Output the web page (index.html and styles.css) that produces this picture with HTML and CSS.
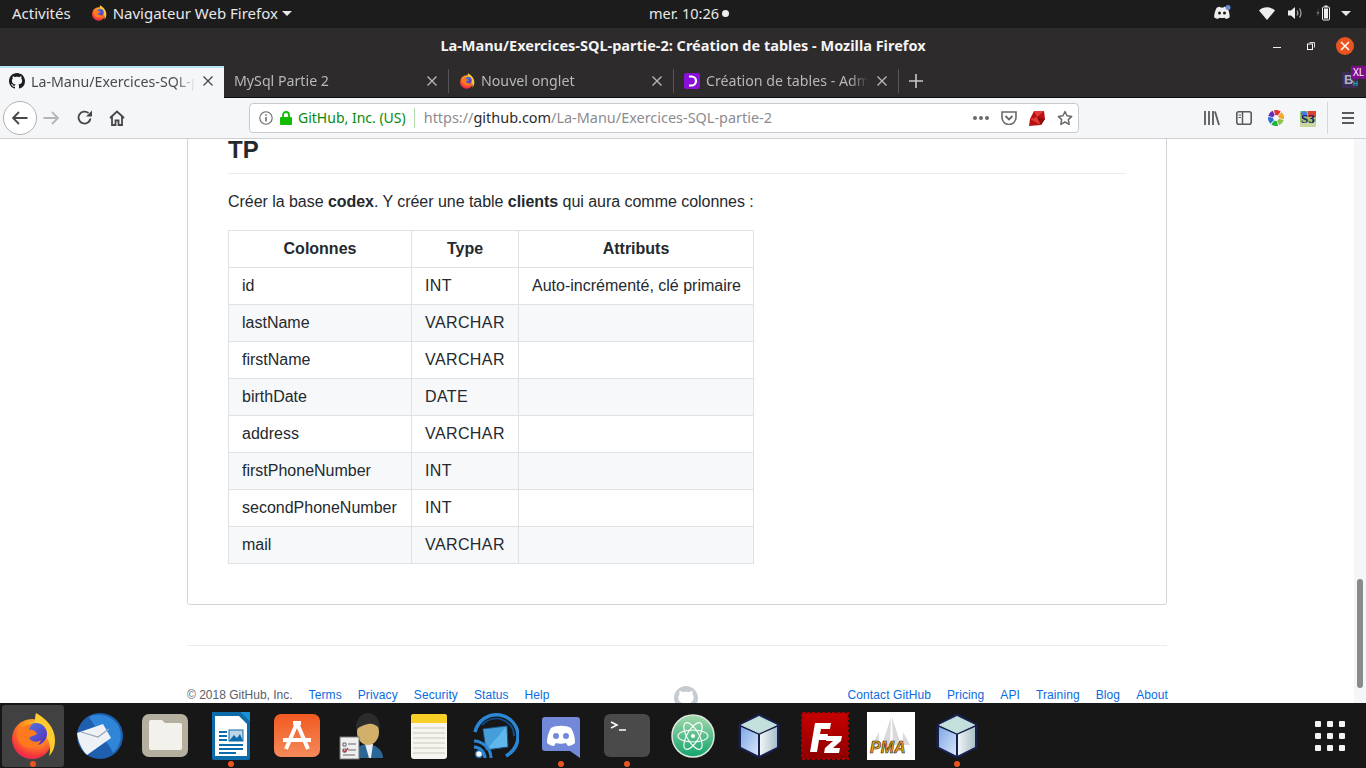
FILE: index.html
```html
<!DOCTYPE html>
<html lang="fr">
<head>
    <meta charset="UTF-8">
    <title>La-Manu/Exercices-SQL-partie-2: Création de tables - Mozilla Firefox</title>
    <link rel="stylesheet" href="styles.css">
</head>
<body>
    <svg class="defs" width="0" height="0">
        <defs>
            <radialGradient id="foxBody" cx="60%" cy="25%" r="85%">
                <stop offset="0" stop-color="#ffd43a"/>
                <stop offset="0.45" stop-color="#ff8a1e"/>
                <stop offset="0.8" stop-color="#f5333f"/>
                <stop offset="1" stop-color="#e0206a"/>
            </radialGradient>
            <linearGradient id="foxGlobe" x1="0" y1="0" x2="1" y2="1">
                <stop offset="0" stop-color="#4a7fe8"/>
                <stop offset="1" stop-color="#5b2bb8"/>
            </linearGradient>
            <linearGradient id="cubeLeft" x1="0" y1="0" x2="1" y2="1">
                <stop offset="0" stop-color="#7fa8e8"/>
                <stop offset="1" stop-color="#d8e6f6"/>
            </linearGradient>
            <linearGradient id="cubeRight" x1="0" y1="0" x2="1" y2="0">
                <stop offset="0" stop-color="#f0f5f8"/>
                <stop offset="1" stop-color="#a9c0c8"/>
            </linearGradient>
            <linearGradient id="appstoreBg" x1="0" y1="0" x2="0" y2="1">
                <stop offset="0" stop-color="#f25a20"/>
                <stop offset="1" stop-color="#f48a5a"/>
            </linearGradient>
            <linearGradient id="atomBg" x1="0" y1="0" x2="0" y2="1">
                <stop offset="0" stop-color="#a4d9ab"/>
                <stop offset="1" stop-color="#12a46d"/>
            </linearGradient>
            <linearGradient id="fzBg" x1="0" y1="0" x2="0" y2="1">
                <stop offset="0" stop-color="#c70000"/>
                <stop offset="1" stop-color="#8c0000"/>
            </linearGradient>
            <symbol id="fox" viewBox="0 0 48 48">
                <circle cx="23" cy="27" r="20" fill="url(#foxBody)"/>
                <path d="M27 1c9 5 19 14 19 27 0 7-2 12-6 16 2-7 1-14-3-19-4-5-10-8-11-15 0-3 0-6 1-9z" fill="#ffcb2e"/>
                <circle cx="27" cy="22" r="11" fill="url(#foxGlobe)"/>
                <path d="M9 20c3-6 10-8 15-8-3 2-4 4-4 6 3-1 7 1 8 4-3 2-6 2-8 4 2 4 8 5 12 2-2 6-9 9-15 7-7-2-10-10-8-15z" fill="#ff7a1f"/>
            </symbol>
            <symbol id="cube" viewBox="0 0 48 48">
                <path d="M24 3l19 10v22L24 45 5 35V13z" fill="#18204e" stroke="#18204e" stroke-width="3" stroke-linejoin="round"/>
                <path d="M24 4.500l17.500 8.500-17.500 8-17.500-8z" fill="#c4e0dc" stroke="#c4e0dc" stroke-linejoin="round"/>
                <path d="M6 15l17 7.500v21L6 35z" fill="url(#cubeLeft)"/>
                <path d="M25 22.500l17-7.500v20l-17 8.500z" fill="url(#cubeRight)"/>
            </symbol>
            <symbol id="octocat" viewBox="0 0 16 16">
                <path fill-rule="evenodd" d="M8 0C3.58 0 0 3.58 0 8c0 3.54 2.29 6.53 5.47 7.59.4.07.55-.17.55-.38 0-.19-.01-.82-.01-1.49-2.01.37-2.53-.49-2.69-.94-.09-.23-.48-.94-.82-1.13-.28-.15-.68-.52-.01-.53.63-.01 1.08.58 1.23.82.72 1.21 1.87.87 2.33.66.07-.52.28-.87.51-1.07-1.78-.2-3.64-.89-3.64-3.95 0-.87.31-1.59.82-2.15-.08-.2-.36-1.02.08-2.12 0 0 .67-.21 2.2.82.64-.18 1.32-.27 2-.27s1.36.09 2 .27c1.53-1.04 2.2-.82 2.2-.82.44 1.1.16 1.92.08 2.12.51.56.82 1.27.82 2.15 0 3.07-1.87 3.75-3.65 3.95.29.25.54.73.54 1.48 0 1.07-.01 1.93-.01 2.2 0 .21.15.46.55.38A8.01 8.01 0 0 0 16 8c0-4.42-3.58-8-8-8z"/>
            </symbol>
        </defs>
    </svg>

    <!-- gnome panel -->
    <header class="top-bar">
        <div class="top-left">
            <span class="activities">Activités</span>
            <svg class="top-fox"><use href="#fox"/></svg>
            <span>Navigateur Web Firefox</span>
            <span class="caret"></span>
        </div>
        <div class="top-clock">mer. 10:26 <span class="clock-dot"></span></div>
        <div class="top-right">
            <svg class="tray-discord" width="18" height="16" viewBox="0 0 18 16">
                <path d="M3.5 3C5 2 6.5 1.8 7 1.8l.3.6h3.4l.3-.6c.5 0 2 .2 3.5 1.2 1.5 3 2.2 6 2.2 9.2-1.200 1-2.600 1.600-4 1.800l-.8-1.300c-2 .5-4 .5-6 0l-.8 1.300c-1.400-.2-2.800-.8-4-1.800C1.300 9 2 6 3.500 3z" fill="#eee"/>
                <circle cx="6.500" cy="8" r="1.500" fill="#1c1c1c"/>
                <circle cx="11.500" cy="8" r="1.500" fill="#1c1c1c"/>
                <circle cx="15" cy="2.500" r="2.500" fill="#6a8ad8"/>
            </svg>
            <svg class="tray-wifi" width="16" height="13" viewBox="0 0 16 13"><path d="M0 3.500C4.500-.8 11.500-.8 16 3.500L8 13z" fill="#eee"/></svg>
            <svg class="tray-sound" width="15" height="14" viewBox="0 0 15 14">
                <path d="M0 4.500h3L7 1v12L3 9.500H0z" fill="#eee"/>
                <path d="M9 4.500c1 1.500 1 3.500 0 5M11.500 2.500c2 2.500 2 6.500 0 9" stroke="#aaa" stroke-width="1.200" fill="none"/>
            </svg>
            <svg class="tray-battery" width="16" height="16" viewBox="0 0 16 16">
                <path d="M3 3.500L.5 8.500h1.500L1 12.500l2.500-5.500H2z" fill="#777"/>
                <rect x="6.500" y="2" width="7" height="13" rx="1" fill="none" stroke="#eee"/>
                <rect x="8.500" y="0.500" width="3" height="1.500" fill="#eee"/>
                <rect x="8" y="3.500" width="4" height="10" fill="#eee"/>
            </svg>
            <span class="caret caret-tray"></span>
        </div>
    </header>

    <div class="title-bar">
        <span class="title-text">La-Manu/Exercices-SQL-partie-2: Création de tables - Mozilla Firefox</span>
        <div class="win-buttons">
            <span class="win-min"></span>
            <svg class="win-max" width="8" height="8" viewBox="0 0 8 8">
                <path d="M2.500 .5h5v5" fill="none" stroke="#ddd"/>
                <rect x=".5" y="2" width="5" height="5.500" fill="none" stroke="#fff"/>
            </svg>
            <span class="win-close">
                <svg width="10" height="10" viewBox="0 0 10 10"><path d="M1 1l8 8M9 1l-8 8" stroke="#fff" stroke-width="1.500"/></svg>
            </span>
        </div>
    </div>

    <div class="tab-bar">
        <div class="tab active">
            <svg class="tab-icon"><use href="#octocat"/></svg>
            <span class="tab-label">La-Manu/Exercices-SQL-partie-2</span>
            <svg class="tab-x" width="10" height="10" viewBox="0 0 10 10"><path d="M.5.5l9 9M9.500.5l-9 9"/></svg>
        </div>
        <div class="tab">
            <span class="tab-label">MySql Partie 2</span>
            <svg class="tab-x" width="10" height="10" viewBox="0 0 10 10"><path d="M.5.5l9 9M9.500.5l-9 9"/></svg>
        </div>
        <div class="tab">
            <svg class="tab-icon"><use href="#fox"/></svg>
            <span class="tab-label">Nouvel onglet</span>
            <svg class="tab-x" width="10" height="10" viewBox="0 0 10 10"><path d="M.5.5l9 9M9.500.5l-9 9"/></svg>
        </div>
        <div class="tab">
            <svg class="tab-icon" viewBox="0 0 16 16">
                <rect width="16" height="16" rx="2" fill="#8a10d8"/>
                <path d="M5 3.500h2.500a4.500 4.500 0 0 1 0 9H5" fill="none" stroke="#fff" stroke-width="2.200"/>
            </svg>
            <span class="tab-label">Création de tables - Adminer</span>
            <svg class="tab-x" width="10" height="10" viewBox="0 0 10 10"><path d="M.5.5l9 9M9.500.5l-9 9"/></svg>
        </div>
        <svg class="tab-plus" width="14" height="14" viewBox="0 0 14 14"><path d="M7 0v14M0 7h14" stroke="#c9c9c9" stroke-width="1.600"/></svg>
        <div class="bh-icon">
            <span class="bh-b">B<span class="bh-h">H</span></span>
            <span class="bh-xl">XL</span>
        </div>
    </div>

    <nav class="nav-bar">
        <span class="back-btn">
            <svg width="16" height="14" viewBox="0 0 16 14"><path d="M15.500 7H1.500M7 1L1 7l6 6" fill="none" stroke="#47474a" stroke-width="1.800"/></svg>
        </span>
        <svg class="nav-forward" width="16" height="14" viewBox="0 0 16 14"><path d="M.5 7h14M9 1l6 6-6 6" fill="none" stroke="#b5b5b7" stroke-width="1.800"/></svg>
        <svg class="nav-reload" width="16" height="16" viewBox="0 0 16 16"><path d="M13.500 8.500A6 6 0 1 1 11.500 3" fill="none" stroke="#47474a" stroke-width="1.800"/><path d="M15 .5V6.500H9z" fill="#47474a"/></svg>
        <svg class="nav-home" width="16" height="16" viewBox="0 0 16 16"><path d="M1 8l7-6.500L15 8M3 6.500V15h3.500v-4.500h3V15H13V6.500" fill="none" stroke="#47474a" stroke-width="1.800"/></svg>

        <div class="url-bar">
            <svg class="url-info" width="14" height="14" viewBox="0 0 14 14"><circle cx="7" cy="7" r="6.200" fill="none" stroke="#666" stroke-width="1.100"/><path d="M7 6v4.500M7 3.200v1.600" stroke="#666" stroke-width="1.500"/></svg>
            <svg class="url-lock" width="12" height="14" viewBox="0 0 12 14"><path d="M3 6.500V4a3 3 0 0 1 6 0v2.500" fill="none" stroke="#12bc00" stroke-width="1.800"/><rect y="6" width="12" height="8" rx="1" fill="#12bc00"/></svg>
            <span class="url-org">GitHub, Inc. (US)</span>
            <span class="url-sep"></span>
            <span class="url-text">https://<b>github.com</b>/La-Manu/Exercices-SQL-partie-2</span>
            <span class="url-dots"><i></i><i></i><i></i></span>
            <svg class="url-pocket" width="16" height="14" viewBox="0 0 16 14"><path d="M1 1h14v5.500a7 7 0 0 1-14 0z" fill="none" stroke="#6a6a6d" stroke-width="1.600"/><path d="M4.500 5L8 8.500 11.500 5" fill="none" stroke="#6a6a6d" stroke-width="1.800"/></svg>
            <svg class="url-ruby" width="16" height="16" viewBox="0 0 16 16"><path d="M5 1h10l1 8-4 6-12 1 1-7z" fill="#b91212"/><path d="M5 1l3 6 7-6zM1 9l7-2 4 8z" fill="#e23b3b"/><path d="M8 7l8 2-4 6z" fill="#8e0b0b"/></svg>
            <svg class="url-star" width="16" height="16" viewBox="0 0 16 16"><path d="M8 1.500l2 4.300 4.700.6-3.400 3.200.9 4.700L8 12l-4.200 2.300.9-4.700L1.300 6.400 6 5.800z" fill="none" stroke="#6a6a6d" stroke-width="1.500" stroke-linejoin="round"/></svg>
        </div>

        <svg class="nav-library" width="16" height="14" viewBox="0 0 16 14"><path d="M1 0v14M5 0v14M9 0v14M11 .5l4 13.500" stroke="#5a5a5d" stroke-width="1.800"/></svg>
        <svg class="nav-sidebar" width="16" height="14" viewBox="0 0 16 14"><rect x=".8" y=".8" width="14.400" height="12.400" rx="2" fill="none" stroke="#5a5a5d" stroke-width="1.600"/><path d="M6.500 1v12" stroke="#5a5a5d" stroke-width="1.500"/><path d="M2.500 4h2.500M2.500 6.500h2.500" stroke="#5a5a5d"/></svg>
        <svg class="nav-wheel" width="16" height="16" viewBox="0 0 16 16" fill="none" stroke-width="5">
            <circle cx="8" cy="8" r="5.500" stroke="#e3342f" stroke-dasharray="4.800 30" transform="rotate(-105 8 8)"/>
            <circle cx="8" cy="8" r="5.500" stroke="#f5a623" stroke-dasharray="4.800 30" transform="rotate(-45 8 8)"/>
            <circle cx="8" cy="8" r="5.500" stroke="#8bc34a" stroke-dasharray="4.800 30" transform="rotate(15 8 8)"/>
            <circle cx="8" cy="8" r="5.500" stroke="#1eb53a" stroke-dasharray="4.800 30" transform="rotate(75 8 8)"/>
            <circle cx="8" cy="8" r="5.500" stroke="#2a6fd6" stroke-dasharray="4.800 30" transform="rotate(135 8 8)"/>
            <circle cx="8" cy="8" r="5.500" stroke="#6a2bb8" stroke-dasharray="4.800 30" transform="rotate(195 8 8)"/>
        </svg>
        <div class="nav-s3">
            <svg width="16" height="16" viewBox="0 0 16 16"><rect width="16" height="16" fill="#9cc36a"/><rect x="8" width="8" height="6" fill="#d9432f"/><circle cx="4" cy="3" r="3" fill="#3f7ee0"/><rect y="11" width="16" height="5" fill="#c8d8a0"/></svg>
            <span class="s3-text">S3</span>
        </div>
        <span class="nav-sep"></span>
        <span class="nav-menu"><i></i><i></i><i></i></span>
    </nav>

    <main class="page">
        <div class="page-inner">
            <article class="readme">
                <h2>TP</h2>
                <p>Créer la base <strong>codex</strong>. Y créer une table <strong>clients</strong> qui aura comme colonnes :</p>
                <table>
                    <thead>
                        <tr><th>Colonnes</th><th>Type</th><th>Attributs</th></tr>
                    </thead>
                    <tbody>
                        <tr><td>id</td><td>INT</td><td>Auto-incrémenté, clé primaire</td></tr>
                        <tr><td>lastName</td><td>VARCHAR</td><td></td></tr>
                        <tr><td>firstName</td><td>VARCHAR</td><td></td></tr>
                        <tr><td>birthDate</td><td>DATE</td><td></td></tr>
                        <tr><td>address</td><td>VARCHAR</td><td></td></tr>
                        <tr><td>firstPhoneNumber</td><td>INT</td><td></td></tr>
                        <tr><td>secondPhoneNumber</td><td>INT</td><td></td></tr>
                        <tr><td>mail</td><td>VARCHAR</td><td></td></tr>
                    </tbody>
                </table>
            </article>
            <footer class="site-footer">
                <div class="footer-left">
                    <span class="copyright">© 2018 GitHub, Inc.</span>
                    <a>Terms</a><a>Privacy</a><a>Security</a><a>Status</a><a>Help</a>
                </div>
                <svg class="footer-mark"><use href="#octocat"/></svg>
                <div class="footer-right">
                    <a>Contact GitHub</a><a>Pricing</a><a>API</a><a>Training</a><a>Blog</a><a>About</a>
                </div>
            </footer>
        </div>
        <div class="scrollbar"><span class="scroll-thumb"></span></div>
    </main>

    <!-- dock -->
    <div class="dock">
        <div class="dock-item focused running">
            <svg class="dock-icon"><use href="#fox"/></svg>
        </div>
        <div class="dock-item">
            <svg class="dock-icon" viewBox="0 0 48 48">
                <circle cx="25" cy="24" r="23" fill="#1f5fb0"/>
                <path d="M14 5c10-5 24-1 30 10 4 9 1 20-6 26-3-8-10-14-14-20-3-5-6-10-10-16z" fill="#2f86d8"/>
                <path d="M2 21l26-9 8 14-24 17C6 37 3 29 2 21z" fill="#eef1f6"/>
                <path d="M6 20l17 5 11-8" fill="none" stroke="#9aa4b4" stroke-width="1.200"/>
            </svg>
        </div>
        <div class="dock-item">
            <svg class="dock-icon" viewBox="0 0 48 48">
                <rect x="1" y="2" width="46" height="43" rx="7" fill="#b5afa0"/>
                <path d="M8 10a2 2 0 0 1 2-2h11l3 3h15a2 2 0 0 1 2 2v23a2 2 0 0 1-2 2H10a2 2 0 0 1-2-2z" fill="#f3f1ec"/>
            </svg>
        </div>
        <div class="dock-item running">
            <svg class="dock-icon" viewBox="0 0 48 48">
                <path d="M5 0h28l10 10v36a2 2 0 0 1-2 2H7a2 2 0 0 1-2-2z" fill="#0e6cab"/>
                <path d="M8 4h24l8 8v32H8z" fill="#fff"/>
                <path d="M33 0l10 10V0z" fill="#1a8fd4"/>
                <rect x="12" y="19" width="8" height="2" fill="#0e6cab"/>
                <rect x="12" y="23" width="8" height="2" fill="#0e6cab"/>
                <rect x="12" y="27" width="8" height="2" fill="#0e6cab"/>
                <rect x="22" y="18" width="14" height="11" fill="#bcd6e8" stroke="#0e6cab"/>
                <path d="M22 29l5-6 3 3 3-4 3 7z" fill="#0e6cab"/>
                <rect x="12" y="32" width="24" height="2" fill="#0e6cab"/>
                <rect x="12" y="36" width="24" height="2" fill="#0e6cab"/>
                <rect x="12" y="40" width="17" height="2" fill="#0e6cab"/>
            </svg>
        </div>
        <div class="dock-item">
            <svg class="dock-icon" viewBox="0 0 48 48">
                <rect x="1" y="2" width="46" height="43" rx="7" fill="url(#appstoreBg)"/>
                <path d="M20 11h8M24 11l-11 26M24 11l11 26M10 28h28" stroke="#fff" stroke-width="4" fill="none"/>
            </svg>
        </div>
        <div class="dock-item">
            <svg class="dock-icon" viewBox="0 0 48 48">
                <path d="M16 46c0-9 5-14 12-14s16 5 16 14z" fill="#2b6796"/>
                <path d="M26 32l4 14h2l2-14z" fill="#e8eef2"/>
                <ellipse cx="29" cy="20" rx="11" ry="13" fill="#d2b06a"/>
                <path d="M17 18C16 6 24 0 30 1s11 6 11 16c-3-4-8-6-12-5-4 1-8 2-12 6z" fill="#2c2c2c"/>
                <rect x="1" y="25" width="19" height="22" fill="#eef0ee" stroke="#777"/>
                <path d="M4 31h3v3H4zM9 32h8M4 37h3v3H4zM9 38h8M4 43h12" fill="none" stroke="#667"/>
                <path d="M4 38l2 2 3-4" fill="none" stroke="#c33" stroke-width="1.300"/>
            </svg>
        </div>
        <div class="dock-item">
            <svg class="dock-icon" viewBox="0 0 48 48">
                <rect x="6" y="2" width="36" height="45" rx="3" fill="#f6f5ef"/>
                <path d="M6 5a3 3 0 0 1 3-3h30a3 3 0 0 1 3 3v6H6z" fill="#f9cf26"/>
                <path d="M8 16h32M8 21h32M8 26h32M8 31h32M8 36h32M8 41h32" stroke="#c9c9c0"/>
            </svg>
        </div>
        <div class="dock-item">
            <svg class="dock-icon" viewBox="0 0 48 48">
                <path d="M4 20C7 8 18 1 29 3c11 2 18 11 18 21 0 9-5 16-12 20" fill="none" stroke="#2b86d4" stroke-width="3.500"/>
                <path d="M11 13c6-6 14-8 21-5 7 3 11 9 11 16" fill="none" stroke="#0e4d8e" stroke-width="1.800"/>
                <path d="M12 17l24-3 1 21-22 3z" fill="#5fb7ec" stroke="#1c4f82"/>
                <path d="M12 17l24-3-20 23z" fill="#2c86c8" opacity=".5"/>
                <circle cx="8" cy="42" r="3.500" fill="#fff" stroke="#1b6bb0" stroke-width="1.500"/>
                <path d="M3 29c9 0 17 8 17 17M3 35c6 0 11 5 11 11" fill="none" stroke="#2b86d4" stroke-width="3"/>
            </svg>
        </div>
        <div class="dock-item running">
            <svg class="dock-icon" viewBox="0 0 48 48">
                <path d="M8 5h32a3 3 0 0 1 3 3v38l-10-7H8a3 3 0 0 1-3-3V8a3 3 0 0 1 3-3z" fill="#7289da"/>
                <path d="M14 16c5-3 15-3 20 0 3 5 4 10 4 15-2 2-5 3-7 3l-2-3c-3 1-7 1-10 0l-2 3c-2 0-5-1-7-3 0-5 1-10 4-15z" fill="#fff"/>
                <circle cx="19" cy="24" r="3" fill="#7289da"/>
                <circle cx="29" cy="24" r="3" fill="#7289da"/>
            </svg>
        </div>
        <div class="dock-item running">
            <svg class="dock-icon" viewBox="0 0 48 48">
                <rect x="1" y="2" width="46" height="43" rx="6" fill="#4a4a4a"/>
                <path d="M8 10l6 3-6 3" fill="none" stroke="#fff" stroke-width="1.500"/>
                <path d="M16 18h7" stroke="#fff" stroke-width="1.500"/>
            </svg>
        </div>
        <div class="dock-item">
            <svg class="dock-icon" viewBox="0 0 48 48">
                <circle cx="24" cy="24" r="21" fill="url(#atomBg)" stroke="#dfe6df" stroke-width="1.500"/>
                <g fill="none" stroke="#fff" stroke-width="1.100">
                    <ellipse cx="24" cy="24" rx="15" ry="6"/>
                    <ellipse cx="24" cy="24" rx="15" ry="6" transform="rotate(60 24 24)"/>
                    <ellipse cx="24" cy="24" rx="15" ry="6" transform="rotate(120 24 24)"/>
                </g>
                <circle cx="24" cy="24" r="2" fill="#fff"/>
            </svg>
        </div>
        <div class="dock-item">
            <svg class="dock-icon"><use href="#cube"/></svg>
        </div>
        <div class="dock-item">
            <svg class="dock-icon" viewBox="0 0 48 48">
                <rect x="1" y="1" width="46" height="46" fill="url(#fzBg)" stroke="#a80000" stroke-width="2" stroke-dasharray="3 2"/>
                <path d="M9 40l5-29h16l-1 6H20l-1 5h8l-1 6h-8l-2 12z" fill="#fff"/>
                <path d="M26 24h15l-1 5-8 7h7l-1 5H23l1-5 8-7h-7z" fill="#fff"/>
            </svg>
        </div>
        <div class="dock-item">
            <div class="pma-icon">
                <svg width="48" height="48" viewBox="0 0 48 48">
                    <path d="M24 5l-9 28h8zM25 5l9 28h-8zM12 20L5 33h7zM36 20l7 13h-7z" fill="#d9d9d9"/>
                </svg>
                <span class="pma-text">PMA</span>
            </div>
        </div>
        <div class="dock-item running">
            <svg class="dock-icon"><use href="#cube"/></svg>
        </div>
        <div class="dock-grid">
            <i></i><i></i><i></i><i></i><i></i><i></i><i></i><i></i><i></i>
        </div>
    </div>
</body>
</html>
```

FILE: styles.css
```css
* {
    box-sizing: border-box;
}

html, body {
    margin: 0;
    height: 768px;
    overflow: hidden;
}

body {
    display: flex;
    flex-direction: column;
    font-family: "Noto Sans", sans-serif;
    background: #fff;
}

.defs {
    position: absolute;
}

/* gnome panel */
.top-bar {
    flex: 0 0 28px;
    display: grid;
    grid-template-columns: 1fr auto 1fr;
    align-items: center;
    padding-bottom: 2px;
    background: #1c1c1c;
    color: #e8e8e8;
    font-size: 15px;
}

.top-left {
    display: flex;
    align-items: center;
    padding-left: 12px;
}

.activities {
    margin-right: 20px;
}

.top-fox {
    width: 16px;
    height: 16px;
    margin-right: 6px;
}

.caret {
    width: 10px;
    height: 5px;
    margin-left: 4px;
    border-left: 5px solid transparent;
    border-right: 5px solid transparent;
    border-top: 5px solid #e8e8e8;
}

.top-clock {
    display: flex;
    align-items: center;
    gap: 3px;
    margin-left: 12px;
    font-size: 14.5px;
}

.clock-dot {
    width: 7px;
    height: 7px;
    border-radius: 50%;
    background: #eee;
}

.top-right {
    display: flex;
    align-items: center;
    justify-content: flex-end;
    padding-right: 15px;
}

.tray-discord {
    margin-right: 28px;
}

.tray-wifi {
    margin-right: 13px;
}

.tray-sound {
    margin-right: 13px;
}

.caret-tray {
    margin-left: 9px;
}

/* window title */
.title-bar {
    flex: 0 0 38px;
    position: relative;
    display: flex;
    align-items: center;
    justify-content: center;
    padding-bottom: 4px;
    background: #2d2b2c;
    color: #f4f4f4;
    font-size: 14.5px;
    font-weight: 700;
}

.win-buttons {
    position: absolute;
    right: 12px;
    top: 9px;
    display: flex;
    align-items: center;
}

.win-min {
    width: 8px;
    height: 1px;
    margin-right: 26px;
    margin-top: 3px;
    background: #eee;
}

.win-max {
    margin-right: 21px;
}

.win-close {
    width: 18px;
    height: 18px;
    border-radius: 50%;
    background: #e9541f;
    display: flex;
    align-items: center;
    justify-content: center;
}

/* tabs */
.tab-bar {
    flex: 0 0 31px;
    display: flex;
    align-items: center;
    background: #2d2b2c;
    border-bottom: 1px solid #0c0c0d;
    position: relative;
}

.tab {
    width: 225px;
    display: flex;
    align-items: center;
    padding: 0 10px;
    color: #b8b8b8;
    font-size: 14.2px;
    position: relative;
}

.tab:not(.active) {
    height: 24px;
    margin-bottom: 2px;
    border-right: 1px solid #55555a;
}

.tab.active {
    width: 224px;
    height: 32px;
    align-self: flex-end;
    margin-bottom: -1px;
    background: #f5f6f7;
    color: #4a4a4f;
    border-top: 2px solid #b5e3f8;
    padding: 0 9px 4px;
}

.tab-icon {
    flex: 0 0 16px;
    width: 16px;
    height: 16px;
    margin-right: 6px;
}

.tab.active .tab-icon {
    fill: #1b1f23;
}

.tab-label {
    flex: 1;
    white-space: nowrap;
    overflow: hidden;
    -webkit-mask-image: linear-gradient(to right, #000 88%, transparent);
    mask-image: linear-gradient(to right, #000 88%, transparent);
}

.tab-x {
    flex: 0 0 10px;
    margin-left: 8px;
    margin-right: 1px;
    fill: none;
    stroke: #b8b8b8;
    stroke-width: 1.400;
}

.tab.active .tab-x {
    stroke: #4a4a4f;
    margin-right: 2px;
}

.tab-plus {
    margin-left: 10px;
    margin-bottom: 2px;
}

.bh-icon {
    position: absolute;
    right: 0;
    top: 0;
    width: 24px;
    height: 24px;
}

.bh-b {
    position: absolute;
    left: 0;
    top: 6px;
    width: 16px;
    height: 16px;
    background: #3a2c55;
    color: #b0b0b8;
    font-family: "Liberation Sans", sans-serif;
    font-size: 13px;
    font-weight: 700;
    line-height: 16px;
    padding-left: 2px;
}

.bh-h {
    position: absolute;
    right: 0;
    bottom: 0;
    color: #2aa3b8;
    font-size: 7px;
    line-height: 8px;
}

.bh-xl {
    position: absolute;
    right: 0;
    top: 0;
    width: 15px;
    height: 13px;
    background: #7f0d8e;
    color: #fff;
    font-size: 10px;
    line-height: 13px;
    text-align: center;
}

/* navigation toolbar */
.nav-bar {
    flex: 0 0 41px;
    display: flex;
    align-items: center;
    padding-bottom: 1px;
    background: #f5f6f7;
    border-bottom: 1px solid #ccced2;
}

.back-btn {
    width: 34px;
    height: 34px;
    margin-left: 3px;
    border: 1px solid #b1b1b3;
    border-radius: 50%;
    background: #fff;
    display: flex;
    align-items: center;
    justify-content: center;
}

.nav-forward {
    margin-left: 6px;
}

.nav-reload {
    margin-left: 18px;
}

.nav-home {
    margin-left: 16px;
}

.url-bar {
    width: 830px;
    height: 30px;
    margin-left: 124px;
    background: #fff;
    border: 1px solid #c8cacd;
    border-radius: 4px;
    display: flex;
    align-items: center;
    padding-left: 9px;
    font-size: 14px;
    color: #8c8c90;
}

.url-info {
    margin-right: 7px;
}

.url-lock {
    margin-right: 6px;
}

.url-org {
    color: #0a8a0a;
    white-space: nowrap;
}

.url-sep {
    width: 1px;
    height: 20px;
    margin: 0 9px 0 8px;
    background: #b5dcb0;
}

.url-text {
    flex: 1;
    font-size: 14.45px;
    white-space: nowrap;
}

.url-text b {
    font-weight: 400;
    color: #2a2a2e;
}

.url-dots {
    display: flex;
    gap: 2px;
    margin-right: 12px;
}

.url-dots i {
    width: 4px;
    height: 4px;
    border-radius: 50%;
    background: #6a6a6d;
}

.url-pocket,
.url-ruby {
    margin-right: 12px;
}

.url-star {
    margin-right: 5px;
}

.nav-library {
    margin-left: 125px;
}

.nav-sidebar,
.nav-wheel {
    margin-left: 16px;
}

.nav-s3 {
    width: 16px;
    height: 16px;
    margin-left: 16px;
    position: relative;
}

.s3-text {
    position: absolute;
    left: 1px;
    top: 2px;
    color: #15206b;
    font-family: "Liberation Serif", serif;
    font-size: 13px;
    font-weight: 700;
    line-height: 14px;
}

.nav-sep {
    width: 1px;
    height: 32px;
    margin-left: 11px;
    background: #d7d8da;
}

.nav-menu {
    display: flex;
    flex-direction: column;
    gap: 3px;
    margin-left: 14px;
}

.nav-menu i {
    width: 12px;
    height: 2px;
    background: #5a5a5d;
}

/* page */
.page {
    flex: 1;
    min-height: 0;
    overflow: hidden;
    position: relative;
    color: #24292e;
    font-family: "Liberation Sans", sans-serif;
    font-size: 16px;
}

.page-inner {
    width: 980px;
    margin: -300px 0 0 187px;
}

.readme {
    height: 766px;
    padding: 295px 40px 0;
    border: 1px solid #d1d5da;
    border-radius: 3px;
}

.readme h2 {
    margin: 0 0 16px;
    padding-bottom: 8px;
    border-bottom: 1px solid #eaecef;
    font-size: 24px;
    line-height: 30px;
}

.readme p {
    margin: 0 0 16px;
    line-height: 24px;
    letter-spacing: -0.04px;
}

table {
    border-collapse: collapse;
    table-layout: fixed;
    width: 526px;
}

th, td {
    height: 37px;
    padding: 6px 13px;
    border: 1px solid #dfe2e5;
    line-height: 24px;
    white-space: nowrap;
}

th {
    font-weight: 700;
}

th:nth-child(1) {
    width: 183px;
}

th:nth-child(2) {
    width: 107px;
}

td:nth-child(2) {
    letter-spacing: 0.4px;
}

tbody tr:nth-child(2n+2) {
    background: #f6f8fa;
}

.site-footer {
    margin-top: 40px;
    padding-top: 40px;
    border-top: 1px solid #eaecef;
    display: flex;
    justify-content: space-between;
    font-size: 12px;
    line-height: 18px;
    position: relative;
}

.site-footer a {
    color: #0a6ce0;
    letter-spacing: 0.1px;
}

.footer-left,
.footer-right {
    display: flex;
    gap: 16px;
}

.footer-right {
    margin-right: -1px;
}

.copyright {
    color: #586069;
}

.footer-mark {
    position: absolute;
    left: 487px;
    top: 40px;
    width: 24px;
    height: 24px;
    fill: #c6cbd1;
}

.scrollbar {
    position: absolute;
    right: 0;
    top: 0;
    bottom: 0;
    width: 12px;
    background: #f5f6f7;
}

.scroll-thumb {
    position: absolute;
    left: 3px;
    top: 440px;
    width: 6px;
    height: 109px;
    border-radius: 3px;
    background: #8a8a8a;
}

/* dock */
.dock {
    flex: 0 0 65px;
    display: flex;
    align-items: center;
    background: #171717;
    position: relative;
}

.dock-item {
    flex: 0 0 66px;
    height: 62px;
    display: flex;
    align-items: center;
    justify-content: center;
    position: relative;
}

.dock-item.focused {
    flex-basis: 62px;
    margin: 0 2px;
    background: #414141;
    border-radius: 3px;
}

.dock-item.running::after {
    content: "";
    position: absolute;
    left: 50%;
    bottom: 0;
    width: 6px;
    height: 6px;
    margin-left: -3px;
    border-radius: 50%;
    background: #e9541f;
}

.dock-icon {
    width: 48px;
    height: 48px;
}

.pma-icon {
    width: 48px;
    height: 48px;
    background: #fff;
    position: relative;
}

.pma-text {
    position: absolute;
    left: 3px;
    bottom: 4px;
    color: #f5a10a;
    font-family: "Liberation Sans", sans-serif;
    font-size: 16px;
    font-style: italic;
    font-weight: 700;
    line-height: 16px;
    -webkit-text-stroke: 0.6px #222;
}

.dock-grid {
    position: absolute;
    right: 21px;
    top: 18px;
    display: grid;
    grid-template-columns: repeat(3, 6px);
    gap: 6px;
}

.dock-grid i {
    width: 6px;
    height: 6px;
    border-radius: 1px;
    background: #f2f2f2;
}
```
